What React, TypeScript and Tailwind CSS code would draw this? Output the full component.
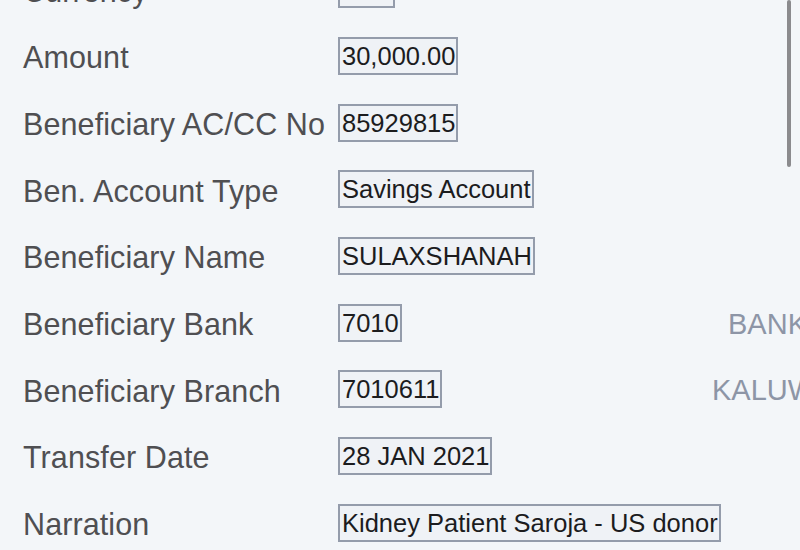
import React from 'react'

interface Row {
  label: string
  value: string
  side?: string
  sidePad?: string
}

const rows: Row[] = [
  { label: 'Currency', value: 'LKR', side: 'SRI LANKA RUPEE', sidePad: 'pl-[18px]' },
  { label: 'Amount', value: '30,000.00' },
  { label: 'Beneficiary AC/CC No', value: '85929815' },
  { label: 'Ben. Account Type', value: 'Savings Account' },
  { label: 'Beneficiary Name', value: 'SULAXSHANAH' },
  { label: 'Beneficiary Bank', value: '7010', side: 'BANK OF CEYLON', sidePad: 'pl-[16px]' },
  { label: 'Beneficiary Branch', value: '7010611', side: 'KALUWANCHIKUDY', sidePad: 'pl-0' },
  { label: 'Transfer Date', value: '28 JAN 2021' },
  { label: 'Narration', value: 'Kidney Patient Saroja - US donor' },
]

export default function App() {
  return (
    <div
      className="relative w-[800px] h-[550px] overflow-hidden bg-[#f3f6f9]"
      style={{ fontFamily: '"Liberation Sans", Arial, sans-serif' }}
    >
      <div className="-mt-[44px] pl-[23px]">
        {rows.map((row) => (
          <div
            key={row.label}
            className="grid grid-cols-[315px_374px_1fr] items-center h-[66.67px] w-[1000px]"
          >
            <div className="pt-[3px] text-[30.5px] leading-none text-[#4f4f52] whitespace-nowrap tracking-[0.1px]">
              {row.label}
            </div>
            <div>
              <span className="inline-block h-[38px] border-2 border-[#949cab] bg-[#eff2f6] pl-[2px] pr-[1px] text-[25.5px] leading-[34px] text-[#1c1c1e] whitespace-nowrap">
                {row.value}
              </span>
            </div>
            <div className={`pt-[3px] text-[29px] leading-none text-[#8d95a6] whitespace-nowrap ${row.sidePad ?? ''}`}>
              {row.side ?? ''}
            </div>
          </div>
        ))}
      </div>

      {/* scrollbar */}
      <div className="absolute right-[9px] top-0 h-[167px] w-[4px] rounded-full bg-[#8b8b8e]" />
    </div>
  )
}
